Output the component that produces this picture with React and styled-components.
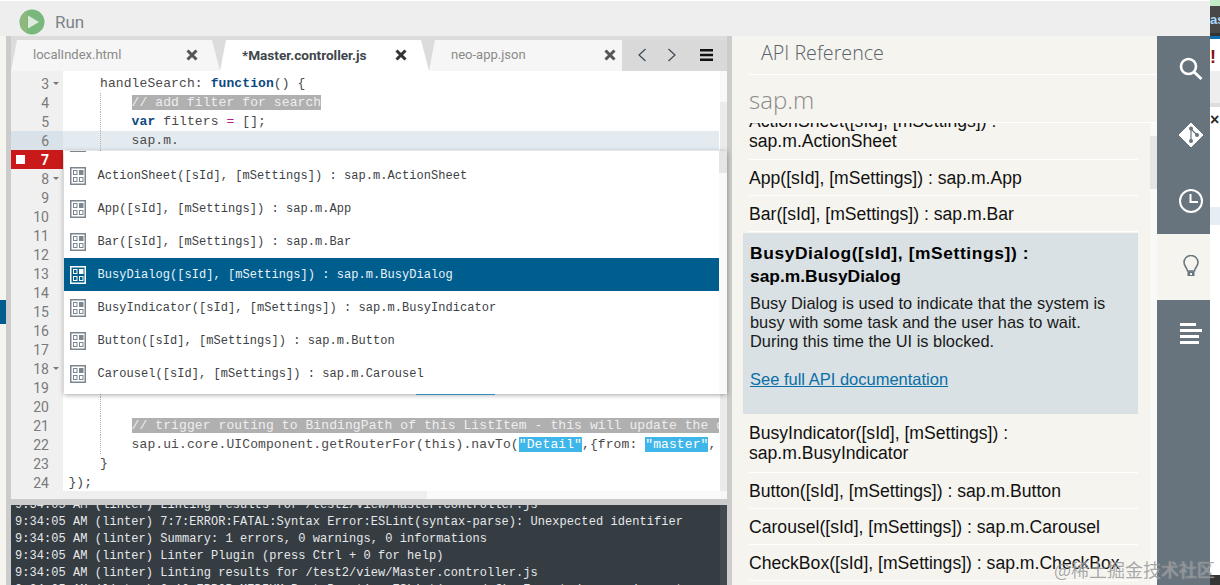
import React from "react";
import styled, { createGlobalStyle } from "styled-components";

const Global = createGlobalStyle`
  html, body { margin: 0; padding: 0; width: 1220px; height: 585px; overflow: hidden; background: #fff; }
  #root { width: 1220px; height: 585px; }
  * { box-sizing: border-box; }
`;

const MONO = `"Liberation Mono", monospace`;
const SANS = `"Liberation Sans", Arial, sans-serif`;

const Page = styled.div`
  position: relative; display: flex; width: 1220px; height: 585px; overflow: hidden;
  font-family: ${SANS};
`;
const Main = styled.div`display: flex; flex-direction: column; width: 1210px; height: 100%;`;
const TopBar = styled.div`
  display: flex; align-items: center; gap: 10px; height: 36px; flex: none;
  padding: 6px 0 0 19px; background: #eeeeee; border-top: 1px solid #fff;
`;
const RunLabel = styled.span`font: 17px Roboto, sans-serif; color: #7b8288;`;
const Body = styled.div`display: flex; flex: 1; min-height: 0;`;
const LeftEdge = styled.div`
  width: 6px; flex: none; background: #f5f4ef; padding-top: 264px;
`;
const EdgeMark = styled.div`height: 24px; background: #005e8f;`;
const Splitter = styled.div`width: 5px; flex: none; background: #cccccc;`;

const EditorCol = styled.div`display: flex; flex-direction: column; width: 716px; flex: none;`;
const TabBar = styled.div`display: flex; height: 35px; flex: none; padding-top: 4px; background: #dcdcdc;`;
const Tab = styled.div`
  display: flex; align-items: center; justify-content: space-between; flex: none;
  width: ${p => p.$w}px; padding: 0 ${p => (p.$last ? 6 : 22)}px 2px 22px;
  background: ${p => (p.$active ? "#ffffff" : "#f6f6f6")};
  clip-path: ${p => p.$last
    ? "polygon(6px 0, 100% 0, 100% 100%, 0 100%)"
    : "polygon(6px 0, calc(100% - 8px) 0, 100% 100%, 0 100%)"};
  font: ${p => (p.$active ? "700 13.6px" : "400 13px")} Roboto, sans-serif;
  color: ${p => (p.$active ? "#3e464c" : "#8a8a8a")};
`;
const TabName = styled.span`white-space: nowrap;`;
const TabTools = styled.div`
  display: flex; flex: 1; align-items: center; padding: 0 0 1px 15px; gap: 20px; height: 31px;
  background: #d9d9d9;
`;
const MenuSlot = styled.div`display: flex; margin-left: 3px;`;

const CodeArea = styled.div`position: relative; display: flex; flex: 1; min-height: 0;`;
const Viewport = styled.div`
  display: flex; flex-direction: column; flex: 1; min-width: 0;
  background: linear-gradient(to right, #f0f0f0 52px, #ffffff 52px);
`;
const Lines = styled.div`flex: 1; min-height: 0; padding-top: 3px; overflow: hidden;`;
const Line = styled.div`
  display: flex; height: 19px; width: 708px;
  background: ${p => (p.$active ? "#e3ebf1" : "transparent")};
`;
const Gutter = styled.div`
  display: flex; align-items: center; justify-content: flex-end; width: 52px; flex: none;
  font: ${p => (p.$error ? "700" : "400")} 14px Roboto, sans-serif;
  color: ${p => (p.$error ? "#fff" : "#7a7a7a")};
  background: ${p => (p.$error ? "#c91919" : p.$active ? "#d9e2e8" : "transparent")};
`;
const ErrorMark = styled.span`width: 9px; height: 9px; margin: 0 auto 0 5px; background: #fff;`;
const FoldSlot = styled.span`
  display: flex; align-items: center; justify-content: center; width: 14px;
  &::after {
    content: ""; display: ${p => (p.$fold ? "block" : "none")};
    border-left: 3px solid transparent; border-right: 3px solid transparent; border-top: 3px solid #777;
  }
`;
const Code = styled.div`
  position: relative; flex: 1; min-width: 0; padding-left: 5.4px; overflow: hidden; white-space: pre;
  font: 13px/19px ${MONO}; letter-spacing: 0.1px; color: #4a4a4a;
  &::before {
    content: ""; display: ${p => (p.$guide ? "block" : "none")};
    position: absolute; left: 37px; top: 0; bottom: 0; border-left: 1px dotted #b5b5b5;
  }
`;
const Kw = styled.span`color: #0b4a80; font-weight: 700;`;
const Op = styled.span`color: #b0208a;`;
const Cm = styled.span`background: #b0b0b0; color: #eeeeee;`;
const Str = styled.span`background: ${p => (p.$dim ? "#2a97c4" : "#3eb6e9")}; color: #fff;`;

const HScroll = styled.div`height: 8px; flex: none; margin-left: 52px; background: #fafafa;`;
const HThumb = styled.div`width: 364px; height: 100%; background: #efefef;`;
const VScroll = styled.div`width: 7px; flex: none; background: #f8f8f8; padding-top: 31px;`;
const VThumb = styled.div`height: 389px; background: #ebebeb;`;

const Popup = styled.div`
  position: absolute; left: 53px; top: 80px; width: 663px; height: 243px; display: flex;
  background: #fff; box-shadow: 0 1px 5px rgba(0,0,0,.35); overflow: hidden;
`;
const PopList = styled.div`flex: 1; margin-top: -25px;`;
const PopRow = styled.div`
  display: flex; align-items: center; gap: 11.5px; height: 33px; padding: 1px 0 0 6px; white-space: pre;
  background: ${p => (p.$sel ? "#005e8f" : "transparent")};
  color: ${p => (p.$sel ? "#eaf3f8" : "#3d4145")};
  font: 12px ${MONO}; letter-spacing: 0.05px;
`;
const PopScroll = styled.div`width: 8px; flex: none; background: #fafafa;`;
const PopThumb = styled.div`height: 22px; background: #e6e6e6;`;

const HBar = styled.div`height: 6px; flex: none; background: #cccccc;`;
const LogWrap = styled.div`display: flex; height: 80px; flex: none; background: #353c42; overflow: hidden;`;
const LogText = styled.div`
  flex: 1; margin-top: -8px; padding-left: 4px; white-space: pre;
  font: 12px/17px ${MONO}; letter-spacing: 0.06px; color: #e6e8ea;
`;
const LogScroll = styled.div`width: 7px; flex: none; background: #41484e;`;

const ApiPanel = styled.div`
  display: flex; flex-direction: column; width: 425px; flex: none; background: #f5f4ef;
`;
const ApiHead = styled.div`
  height: 39px; flex: none; margin-left: 17px; padding-left: 12px; border-bottom: 1px solid #fff;
  font: 300 19.7px/34px "Open Sans", sans-serif; color: #59636b;
`;
const ApiSearch = styled.div`
  height: 48px; flex: none; margin-left: 17px; border-bottom: 1px solid #fff;
  font: 300 24px/49px "Open Sans", sans-serif; color: #8a8a8a;
`;
const ApiBody = styled.div`display: flex; flex: 1; min-height: 0;`;
const ApiList = styled.div`flex: 1; min-width: 0; overflow: hidden; padding-right: 12px;`;
const ApiInner = styled.div`margin-top: -19px; color: #111;`;
const ApiItem = styled.div`
  margin-left: 17px; padding: ${p => p.$t ?? 8}px 0 ${p => p.$b ?? 7}px; border-bottom: 1px solid #fff;
  font: 17.6px/20px ${SANS}; white-space: pre-line;
`;
const ApiDetail = styled.div`
  margin: 1px 0 2px 11px; height: 181px; padding: 9px 7px 0; background: #d9e1e4;
`;
const DetailTitle = styled.div`font: 700 17.4px/23px ${SANS}; color: #000;`;
const TitleLine = styled.div`letter-spacing: ${p => p.$ls || 0}px; white-space: nowrap;`;
const DetailDesc = styled.div`margin-top: 6px; font: 16.4px/19px ${SANS}; color: #1a1a1a; white-space: pre-line;`;
const DetailLink = styled.a`display: block; margin-top: 19px; font: 16.5px/19px ${SANS}; color: #0a6ea8; text-decoration: underline;`;
const ApiScroll = styled.div`width: 7px; flex: none; background: #f9f9f8; padding-top: 13px;`;
const ApiThumb = styled.div`height: 53px; background: #e5e5e5;`;

const Sidebar = styled.div`width: 53px; flex: none; background: #68747d;`;
const SideItem = styled.div`
  display: flex; align-items: center; justify-content: center; height: 66px; padding-left: 14px;
  background: ${p => (p.$active ? "#f5f4ef" : "transparent")};
`;

const Strip = styled.div`display: flex; flex-direction: column; width: 10px; flex: none; height: 100%; background: #fff;`;
const StripBand = styled.div`
  height: ${p => p.$h}px; flex: none; background: ${p => p.$c}; overflow: hidden; white-space: nowrap;
  font: ${p => p.$font || "13px"} ${SANS}; color: ${p => p.$fg || "#000"};
`;
const StripFill = styled.div`flex: 1;`;

const Watermark = styled.div`
  position: absolute; left: 1054px; top: 557px; white-space: nowrap;
  font: 18px/24px "Noto Sans CJK SC", sans-serif; color: rgba(110,110,110,.6);
  text-shadow: 0 0 1px rgba(255,255,255,.7);
`;

const RunIcon = () => (
  <svg width="26" height="26" viewBox="0 0 26 26">
    <circle cx="13" cy="13" r="12.5" fill="#78b87c" />
    <path d="M1 13A12 12 0 0 1 8 2V24A12 12 0 0 1 1 13Z" fill="#a9b87c" opacity=".5" />
    <path d="M9 6.5L20 13L9 19.5Z" fill="#dcebdc" />
  </svg>
);
const CloseIcon = ({ color = "#555" }) => (
  <svg width="12" height="12" viewBox="0 0 12 12" style={{ flex: "none" }}>
    <path d="M1.5 1.5L10.5 10.5M10.5 1.5L1.5 10.5" stroke={color} strokeWidth="3" />
  </svg>
);
const Chevron = ({ dir }) => (
  <svg width="10" height="14" viewBox="0 0 10 14">
    <path d={dir === "l" ? "M8.5 1L2 7L8.5 13" : "M1.5 1L8 7L1.5 13"} fill="none" stroke="#3c4a55" strokeWidth="1.2" />
  </svg>
);
const MenuIcon = () => (
  <svg width="13" height="12" viewBox="0 0 13 12">
    <path d="M0 0h13v2.4H0zM0 4.8h13v2.4H0zM0 9.6h13v2.4H0z" fill="#111" />
  </svg>
);
const ItemIcon = ({ sel }) => {
  const c = sel ? "#ffffff" : "#7b868e";
  return (
    <svg width="16" height="18" viewBox="0 0 16 18" style={{ flex: "none" }}>
      <rect x="0.75" y="0.75" width="14.5" height="16.5" fill={sel ? "#005e8f" : "#fff"} stroke={c} strokeWidth="1.5" />
      <rect x="3.5" y="3.5" width="3.5" height="4" fill="none" stroke={c} />
      <rect x="9" y="3" width="4.5" height="5" fill={c} />
      <rect x="3.5" y="10.5" width="3.5" height="4" fill="none" stroke={c} />
      <rect x="9.5" y="10.5" width="3.5" height="4" fill="none" stroke={c} />
    </svg>
  );
};
const SearchIcon = () => (
  <svg width="26" height="26" viewBox="0 0 26 26">
    <circle cx="10.5" cy="10.5" r="7.5" fill="none" stroke="#fff" strokeWidth="2.6" />
    <path d="M16 16L23.5 23" stroke="#fff" strokeWidth="3" />
  </svg>
);
const GitIcon = () => (
  <svg width="26" height="26" viewBox="0 0 26 26">
    <path d="M13 1L25 13L13 25L1 13Z" fill="#fff" stroke="#fff" strokeLinejoin="round" />
    <path d="M13 6V19M13 7L19 13" stroke="#68747d" strokeWidth="1.2" />
    <circle cx="13" cy="6.5" r="2" fill="#68747d" />
    <circle cx="19" cy="13" r="2" fill="#68747d" />
    <circle cx="13" cy="19" r="2" fill="#68747d" />
  </svg>
);
const ClockIcon = () => (
  <svg width="26" height="26" viewBox="0 0 26 26">
    <circle cx="13" cy="13" r="11" fill="none" stroke="#fff" strokeWidth="2" />
    <path d="M12.5 6V14H20" fill="none" stroke="#fff" strokeWidth="2" />
  </svg>
);
const BulbIcon = () => (
  <svg width="18" height="24" viewBox="0 0 18 24">
    <path d="M5.5 16C5 12.5 2 11 2 7.5A7 7 0 0 1 16 7.5C16 11 13 12.5 12.5 16Z" fill="none" stroke="#66757f" strokeWidth="1.5" />
    <rect x="5.5" y="16.5" width="7" height="4.5" fill="#66757f" />
    <rect x="8" y="18" width="2" height="2" fill="#f5f4ef" />
  </svg>
);
const OutlineIcon = () => (
  <svg width="22" height="21" viewBox="0 0 22 21">
    <path d="M0 0h16v3H0zM0 6h22v3H0zM0 12h19v3H0zM0 18h19v3H0z" fill="#fff" />
  </svg>
);

const sp = n => " ".repeat(n);
const codeLines = [
  { n: 3, fold: true, c: <>{sp(4)}handleSearch: <Kw>function</Kw>() {"{"}</> },
  { n: 4, g: true, c: <>{sp(8)}<Cm>// add filter for search</Cm></> },
  { n: 5, g: true, c: <>{sp(8)}<Kw>var</Kw> filters <Op>=</Op> [];</> },
  { n: 6, g: true, active: true, c: <>{sp(8)}sap.m.</> },
  { n: 7, g: true, error: true, c: <>{sp(47)}<Str $dim>{sp(13)}</Str></> },
  { n: 8, g: true, fold: true },
  { n: 9, g: true }, { n: 10, g: true }, { n: 11, g: true }, { n: 12, g: true },
  { n: 13, g: true }, { n: 14, g: true }, { n: 15, g: true }, { n: 16, g: true }, { n: 17, g: true },
  { n: 18, g: true, fold: true },
  { n: 19, g: true, c: <>{sp(44)}<Str>{sp(10)}</Str></> },
  { n: 20, g: true },
  { n: 21, g: true, c: <>{sp(8)}<Cm>// trigger routing to BindingPath of this ListItem - this will update the data binding</Cm></> },
  { n: 22, g: true, c: <>{sp(8)}sap.ui.core.UIComponent.getRouterFor(this).navTo(<Str>"Detail"</Str>,{"{"}from: <Str>"master"</Str>,</> },
  { n: 23, c: <>{sp(4)}{"}"}</> },
  { n: 24, c: <>{"});"}</> },
];

const popItems = [
  "",
  "ActionSheet([sId], [mSettings]) : sap.m.ActionSheet",
  "App([sId], [mSettings]) : sap.m.App",
  "Bar([sId], [mSettings]) : sap.m.Bar",
  "BusyDialog([sId], [mSettings]) : sap.m.BusyDialog",
  "BusyIndicator([sId], [mSettings]) : sap.m.BusyIndicator",
  "Button([sId], [mSettings]) : sap.m.Button",
  "Carousel([sId], [mSettings]) : sap.m.Carousel",
];

const logLines = [
  "9:34:05 AM (linter) Linting results for /test2/view/Master.controller.js",
  "9:34:05 AM (linter) 7:7:ERROR:FATAL:Syntax Error:ESLint(syntax-parse): Unexpected identifier",
  "9:34:05 AM (linter) Summary: 1 errors, 0 warnings, 0 informations",
  "9:34:05 AM (linter) Linter Plugin (press Ctrl + 0 for help)",
  "9:34:05 AM (linter) Linting results for /test2/view/Master.controller.js",
  "9:34:05 AM (linter) 6:10:ERROR:MEDIUM:Best Practice:ESLint(no-undef): Expected an assignment",
];

const tabs = [
  { name: "localIndex.html", w: 209 },
  { name: "*Master.controller.js", w: 209, active: true },
  { name: "neo-app.json", w: 193, last: true },
];

export default function App() {
  return (
    <Page>
      <Global />
      <Main>
        <TopBar><RunIcon /><RunLabel>Run</RunLabel></TopBar>
        <Body>
          <LeftEdge><EdgeMark /></LeftEdge>
          <Splitter />
          <EditorCol>
            <TabBar>
              {tabs.map(t => (
                <Tab key={t.name} $w={t.w} $active={t.active} $last={t.last}>
                  <TabName>{t.name}</TabName>
                  <CloseIcon color={t.active ? "#333" : "#555"} />
                </Tab>
              ))}
              <TabTools>
                <Chevron dir="l" /><Chevron dir="r" /><MenuSlot><MenuIcon /></MenuSlot>
              </TabTools>
            </TabBar>
            <CodeArea>
              <Viewport>
                <Lines>
                  {codeLines.map(l => (
                    <Line key={l.n} $active={l.active}>
                      <Gutter $error={l.error} $active={l.active}>
                        {l.error && <ErrorMark />}
                        {l.n}
                        <FoldSlot $fold={l.fold} />
                      </Gutter>
                      <Code $guide={l.g}>{l.c}</Code>
                    </Line>
                  ))}
                </Lines>
                <HScroll><HThumb /></HScroll>
              </Viewport>
              <VScroll><VThumb /></VScroll>
              <Popup>
                <PopList>
                  {popItems.map((t, i) => (
                    <PopRow key={i} $sel={i === 4}>
                      <ItemIcon sel={i === 4} />{t}
                    </PopRow>
                  ))}
                </PopList>
                <PopScroll><PopThumb /></PopScroll>
              </Popup>
            </CodeArea>
            <HBar />
            <LogWrap>
              <LogText>{logLines.map(l => <div key={l}>{l}</div>)}</LogText>
              <LogScroll />
            </LogWrap>
          </EditorCol>
          <Splitter />
          <ApiPanel>
            <ApiHead>API Reference</ApiHead>
            <ApiSearch>sap.m</ApiSearch>
            <ApiBody>
              <ApiList>
                <ApiInner>
                  <ApiItem $t={7} $b={8}>{"ActionSheet([sId], [mSettings]) :\nsap.m.ActionSheet"}</ApiItem>
                  <ApiItem>App([sId], [mSettings]) : sap.m.App</ApiItem>
                  <ApiItem>Bar([sId], [mSettings]) : sap.m.Bar</ApiItem>
                  <ApiDetail>
                    <DetailTitle>
                      <TitleLine $ls={0.6}>BusyDialog([sId], [mSettings]) :</TitleLine>
                      <TitleLine>sap.m.BusyDialog</TitleLine>
                    </DetailTitle>
                    <DetailDesc>{"Busy Dialog is used to indicate that the system is\nbusy with some task and the user has to wait.\nDuring this time the UI is blocked."}</DetailDesc>
                    <DetailLink>See full API documentation</DetailLink>
                  </ApiDetail>
                  <ApiItem $t={7} $b={9}>{"BusyIndicator([sId], [mSettings]) :\nsap.m.BusyIndicator"}</ApiItem>
                  <ApiItem>Button([sId], [mSettings]) : sap.m.Button</ApiItem>
                  <ApiItem>Carousel([sId], [mSettings]) : sap.m.Carousel</ApiItem>
                  <ApiItem>CheckBox([sId], [mSettings]) : sap.m.CheckBox</ApiItem>
                </ApiInner>
              </ApiList>
              <ApiScroll><ApiThumb /></ApiScroll>
            </ApiBody>
          </ApiPanel>
          <Sidebar>
            <SideItem><SearchIcon /></SideItem>
            <SideItem><GitIcon /></SideItem>
            <SideItem><ClockIcon /></SideItem>
            <SideItem $active><BulbIcon /></SideItem>
            <SideItem><OutlineIcon /></SideItem>
          </Sidebar>
        </Body>
      </Main>
      <Strip>
        <StripBand $h={6} $c="#c3ebc5" />
        <StripBand $h={27} $c="#484848" $fg="#a9d8f5" $font="700 13px/27px">as</StripBand>
        <StripBand $h={3} $c="#333" />
        <StripBand $h={3} $c="#0a70b5" />
        <StripBand $h={32} $c="#fff" $fg="#8a1010" $font="700 18px/36px">!</StripBand>
        <StripBand $h={32} $c="#eeeeee" />
        <StripBand $h={4} $c="#dddddd" />
        <StripBand $h={26} $c="#fff" $fg="#2a2a2a" $font="700 16px/26px">×</StripBand>
        <StripBand $h={74} $c="#fff" />
        <StripBand $h={18} $c="#e6edf3" />
        <StripFill />
        <StripBand $h={10} $c="#353535" />
      </Strip>
      <Watermark>@稀土掘金技术社区</Watermark>
    </Page>
  );
}
